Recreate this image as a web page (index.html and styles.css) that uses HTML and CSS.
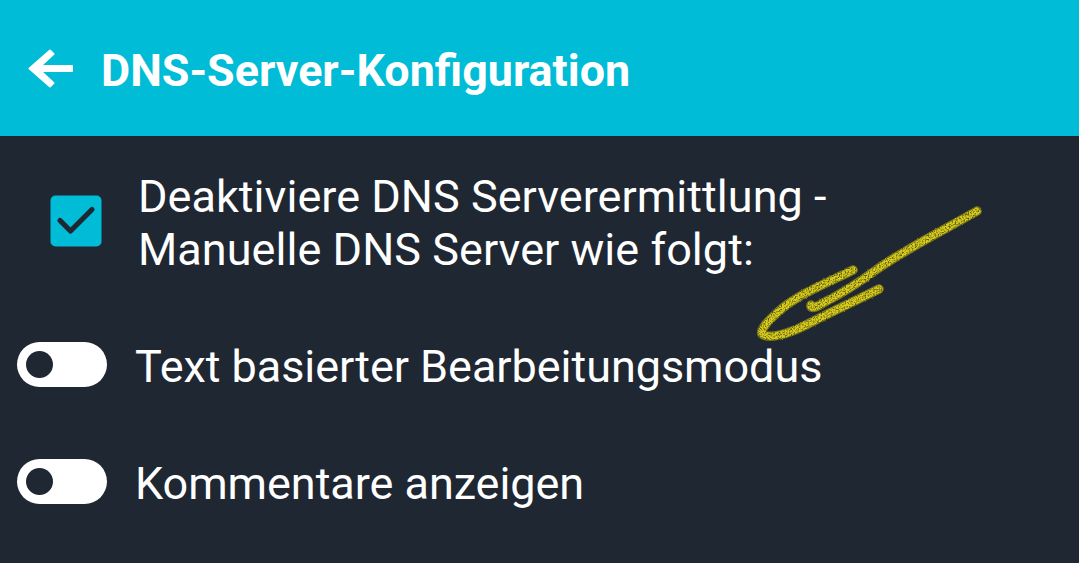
FILE: index.html
```html
<!DOCTYPE html>
<html lang="de">
<head>
  <meta charset="UTF-8" />
  <meta name="viewport" content="width=device-width, initial-scale=1.0"/>
  <title>DNS-Server-Konfiguration</title>
  <link rel="stylesheet" href="styles.css">
</head>
<body>
  <header class="topbar">
    <svg class="back" width="48" height="42" viewBox="0 0 48 42">
      <path d="M3.5 21.5 L24 3.5 L27.5 7 L14.5 19 H46 V24 H14.5 L27.5 36 L24 39.5 Z" />
    </svg>
    <h1>DNS-Server-Konfiguration</h1>
  </header>

  <main class="settings">
    <div class="option option-check">
      <svg class="checkbox" width="52" height="52" viewBox="0 0 52 52">
        <rect x="0.5" y="0.5" width="51" height="51" rx="5" />
        <path d="M10 25.5 L20.5 36 L42 14.5" />
      </svg>
      <p class="label">Deaktiviere DNS Serverermittlung -<br>Manuelle DNS Server wie folgt:</p>
    </div>
    <div class="option option-toggle">
      <span class="toggle"></span>
      <p class="label">Text basierter Bearbeitungsmodus</p>
    </div>
    <div class="option option-toggle">
      <span class="toggle"></span>
      <p class="label">Kommentare anzeigen</p>
    </div>
  </main>

  <!-- hand-drawn arrow over the settings -->
  <svg class="scribble" width="260" height="160" viewBox="0 0 260 160">
    <defs>
      <filter id="chalk" filterUnits="userSpaceOnUse" x="0" y="0" width="260" height="160" color-interpolation-filters="sRGB">
        <feTurbulence type="fractalNoise" baseFrequency="0.7" numOctaves="2" seed="4" result="noise" />
        <feDisplacementMap in="SourceGraphic" in2="noise" scale="2" xChannelSelector="R" yChannelSelector="G" result="rough" />
        <feColorMatrix in="noise" type="matrix" values="0 0 0 0 0.35  0 0 0 0 0.34  0 0 0 0 0.05  3 0 0 0 -1.3" result="grain" />
        <feComposite in="grain" in2="rough" operator="in" result="specks" />
        <feMerge>
          <feMergeNode in="rough" />
          <feMergeNode in="specks" />
        </feMerge>
      </filter>
    </defs>
    <g filter="url(#chalk)">
      <path class="edge" d="M112 79 C84 93 55 104 36 122 C26 131 19 139 21 143 C28 149 49 142 65 134 C90 121 114 110 138 98" />
      <path class="edge" d="M236 20 C205 38 166 57 135 79 C116 93 96 105 82 112 C73 118 69 117 70 114" />
      <path d="M112 79 C84 93 55 104 36 122 C26 131 19 139 21 143 C28 149 49 142 65 134 C90 121 114 110 138 98" />
      <path d="M236 20 C205 38 166 57 135 79 C116 93 96 105 82 112 C73 118 69 117 70 114" />
    </g>
  </svg>
</body>
</html>
```
FILE: styles.css
```css
body {
  margin: 0;
  font-family: Roboto, sans-serif;
  background-color: #1e2732;
  color: #ffffff;
  min-height: 563px;
  position: relative;
  overflow: hidden;
}
.topbar {
  display: flex;
  align-items: center;
  box-sizing: border-box;
  height: 136px;
  padding: 4px 0 0 26px;
  background-color: #00bcd7;
}
.back {
  margin-top: -4px;
}
.back path {
  fill: #ffffff;
  stroke: #ffffff;
  stroke-width: 2;
  stroke-linejoin: round;
}
h1 {
  margin: 0 0 0 27px;
  font-size: 44.85px;
  line-height: 53px;
  font-weight: bold;
}
.settings {
  padding-top: 34px;
}
.option {
  display: flex;
  align-items: flex-start;
}
.option-check {
  padding-left: 50px;
}
.option-check .label {
  letter-spacing: 0.04px;
}
.checkbox {
  margin: 25px 36px 0 0;
}
.checkbox rect {
  fill: #00bcd7;
}
.checkbox path {
  fill: none;
  stroke: #1e2732;
  stroke-width: 5.2;
  stroke-linecap: round;
  stroke-linejoin: round;
}
.option-toggle {
  margin-top: 64px;
  padding-left: 17px;
}
.option-toggle .label {
  letter-spacing: -0.05px;
}
.toggle {
  box-sizing: border-box;
  width: 90px;
  height: 45px;
  margin: 2px 28px 0 0;
  padding: 9px;
  border-radius: 23px;
  background-color: #ffffff;
}
.toggle::before {
  content: "";
  display: block;
  width: 27px;
  height: 27px;
  border-radius: 50%;
  background-color: #1e2732;
}
.label {
  margin: 0;
  font-size: 45px;
  line-height: 53px;
  white-space: nowrap;
}
.scribble {
  position: absolute;
  left: 741px;
  top: 191px;
}
.scribble path {
  fill: none;
  stroke: #d8cd1e;
  stroke-width: 7;
  stroke-linecap: round;
  stroke-linejoin: round;
}
.scribble .edge {
  stroke: #85811f;
  stroke-width: 9.5;
}
```
